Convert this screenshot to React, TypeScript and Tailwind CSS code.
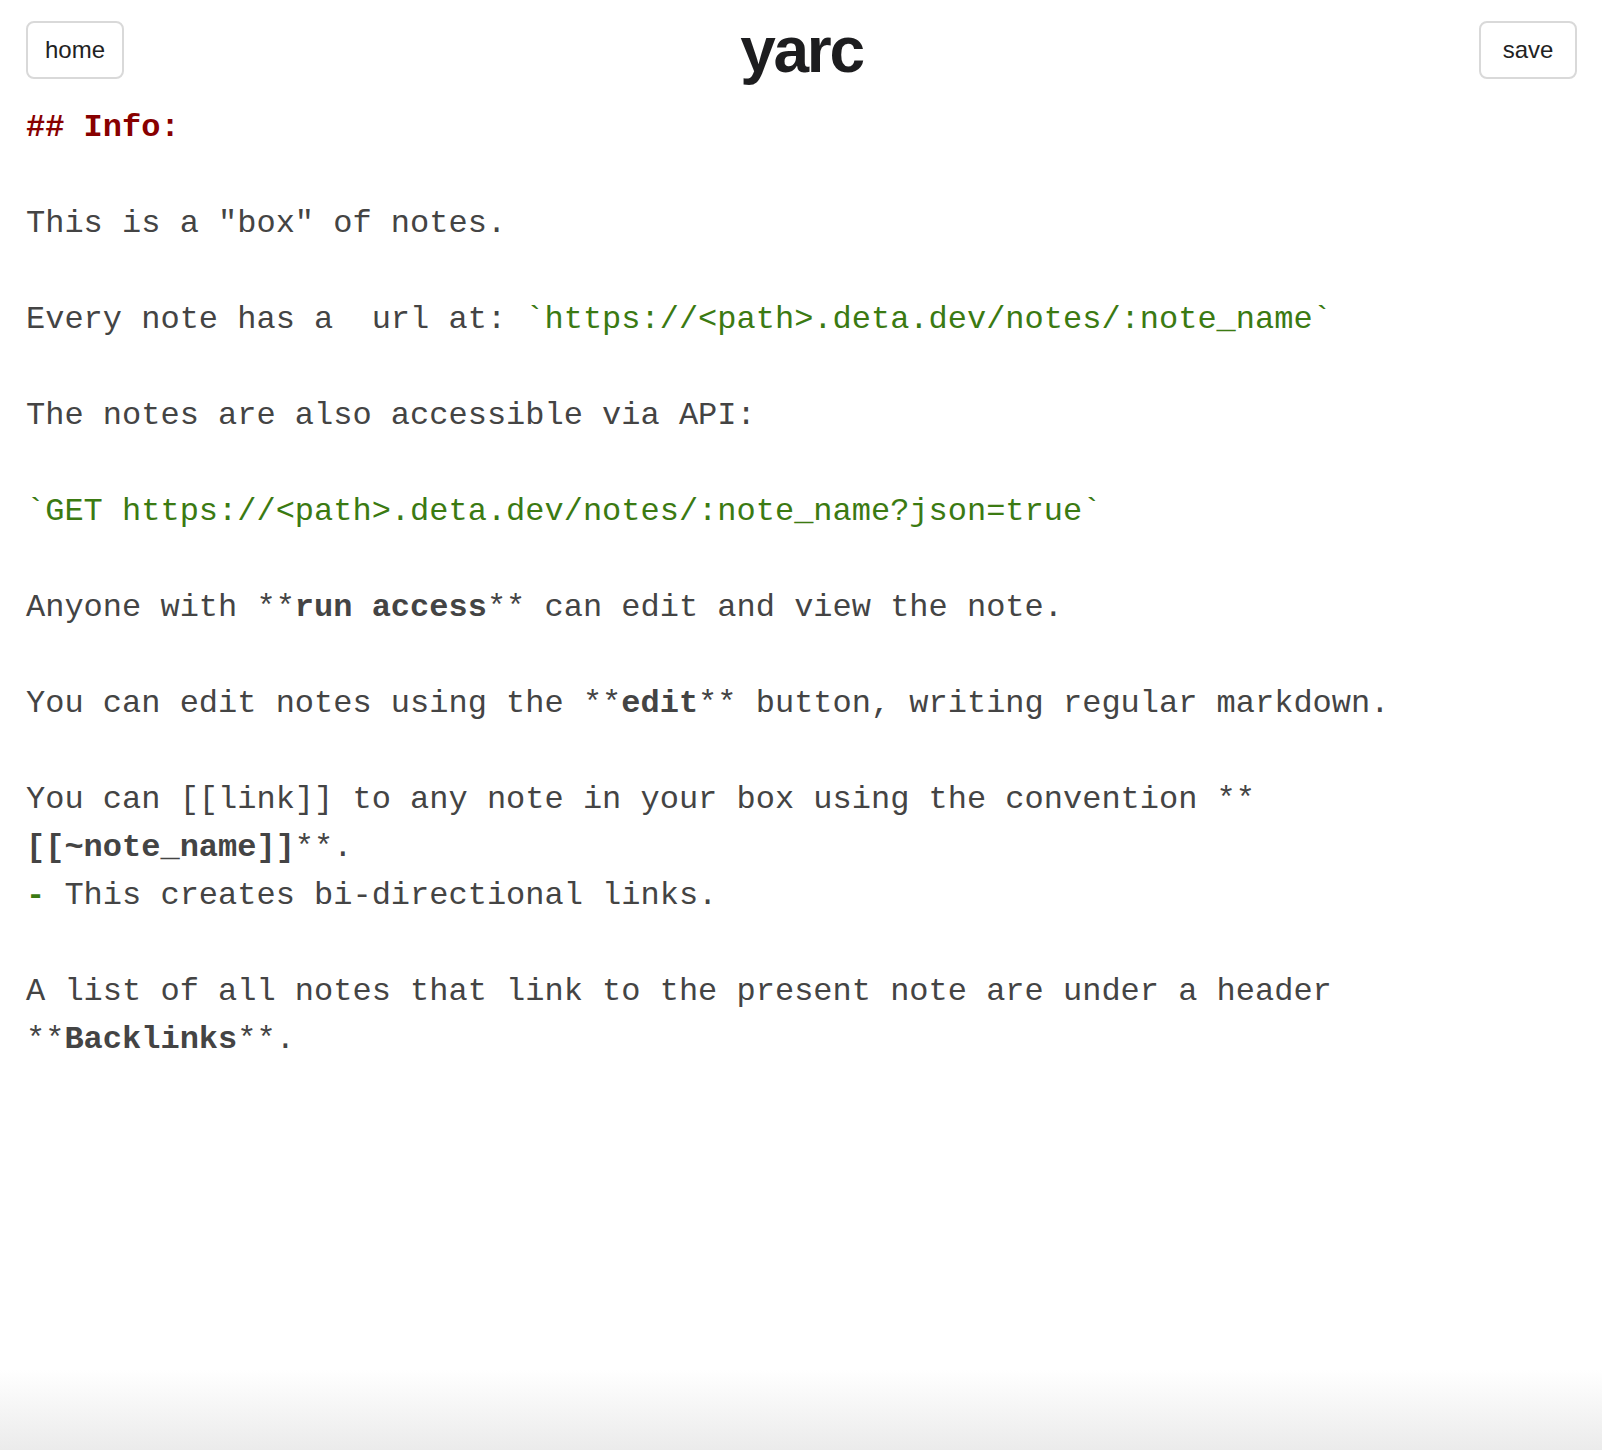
import React from "react";

const mono = "font-['Liberation_Mono','Courier_New',monospace]";

const Btn = ({ label }: { label: string }) => (
  <button className="h-[58px] w-[98px] rounded-[8px] border-2 border-[#d9d9d9] bg-white text-[24px] text-[#222] font-['Liberation_Sans',Arial,sans-serif]">
    {label}
  </button>
);

const Code = ({ children }: { children: React.ReactNode }) => (
  <span className="text-[#3b7a12]">{children}</span>
);

const B = ({ children }: { children: React.ReactNode }) => (
  <span className="font-bold">{children}</span>
);

const App = () => {
  return (
    <div className="min-h-screen flex flex-col bg-white">
      {/* header */}
      <div className="h-[58px] mt-[21px] flex items-center justify-between pl-[26px] pr-[25px]">
        <Btn label="home" />
        <h1 className="text-[64px] leading-none font-bold tracking-[-0.035em] text-[#1d1d1f] font-['Liberation_Sans',Arial,sans-serif]">
          yarc
        </h1>
        <Btn label="save" />
      </div>

      {/* note source */}
      <div
        className={`mt-[25px] pl-[26px] text-[32px] leading-[48px] text-[#444] whitespace-pre ${mono}`}
      >
        <div className="font-bold text-[#880000]">## Info:</div>
        <div>&nbsp;</div>
        <div>This is a "box" of notes.</div>
        <div>&nbsp;</div>
        <div>
          Every note has a  url at:{" "}
          <Code>`https://&lt;path&gt;.deta.dev/notes/:note_name`</Code>
        </div>
        <div>&nbsp;</div>
        <div>The notes are also accessible via API:</div>
        <div>&nbsp;</div>
        <div>
          <Code>`GET https://&lt;path&gt;.deta.dev/notes/:note_name?json=true`</Code>
        </div>
        <div>&nbsp;</div>
        <div>
          Anyone with **<B>run access</B>** can edit and view the note.
        </div>
        <div>&nbsp;</div>
        <div>
          You can edit notes using the **<B>edit</B>** button, writing regular markdown.
        </div>
        <div>&nbsp;</div>
        <div>You can [[link]] to any note in your box using the convention **</div>
        <div>
          <B>[[~note_name]]</B>**.
        </div>
        <div>
          <span className="font-bold text-[#3b7a12]">-</span> This creates bi-directional links.
        </div>
        <div>&nbsp;</div>
        <div>A list of all notes that link to the present note are under a header</div>
        <div>
          **<B>Backlinks</B>**.
        </div>
      </div>

      <div className="flex-1" />
      {/* bottom fade */}
      <div className="h-[80px] bg-gradient-to-b from-white to-[#ebebeb]" />
    </div>
  );
};

export default App;
